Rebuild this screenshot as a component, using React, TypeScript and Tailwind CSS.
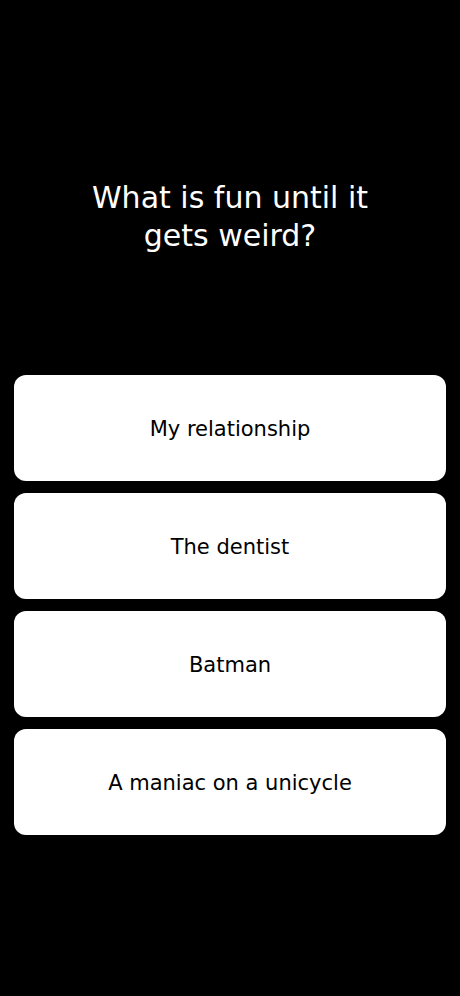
const options = ["My relationship", "The dentist", "Batman", "A maniac on a unicycle"]

export default function App() {
  return (
    <div
      className="w-[460px] h-[996px] bg-black flex flex-col"
      style={{ fontFamily: '"DejaVu Sans", sans-serif' }}
    >
      <div className="h-[375px] flex items-center justify-center pt-[58px]">
        <h1 className="text-white text-[30px] leading-[38px] text-center w-[320px]">
          What is fun until it gets weird?
        </h1>
      </div>
      <div className="flex flex-col gap-3 px-[14px]">
        {options.map((opt) => (
          <button
            key={opt}
            className="h-[106px] w-full bg-white rounded-xl flex items-center justify-center pt-[4px] text-black text-[21px]"
          >
            {opt}
          </button>
        ))}
      </div>
    </div>
  )
}
